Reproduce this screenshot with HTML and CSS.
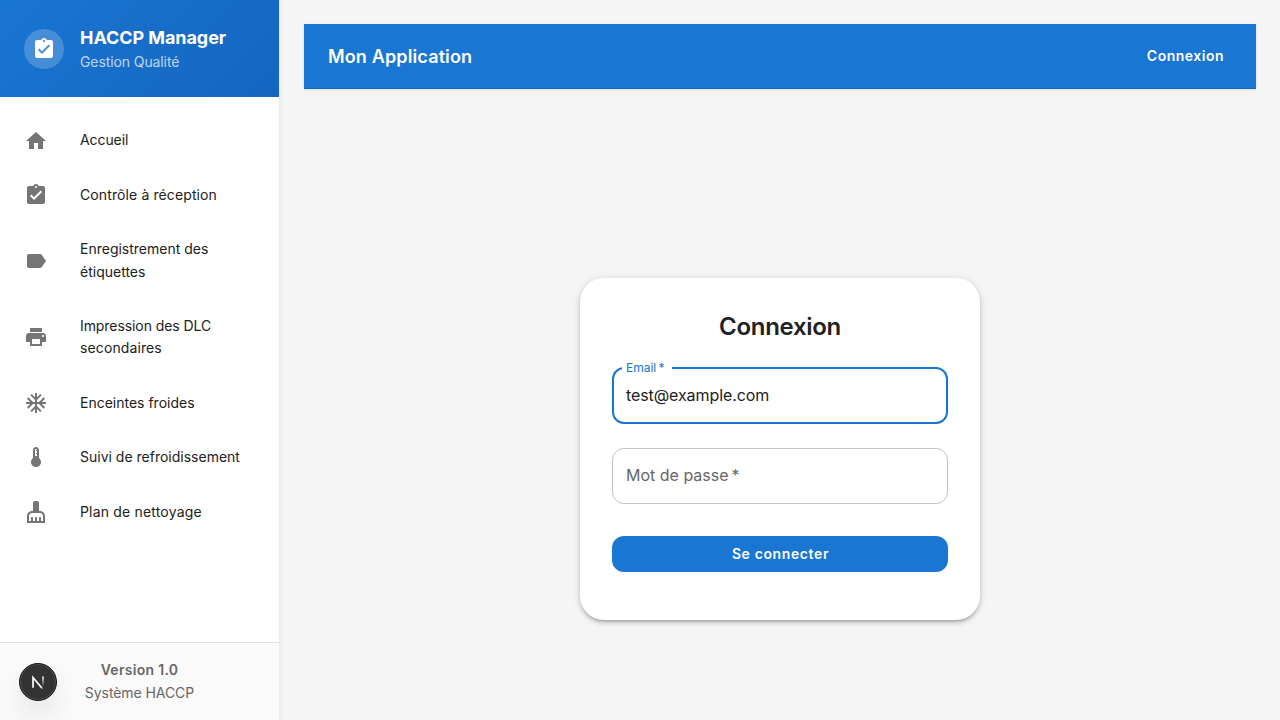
FILE: index.html
```html
<!DOCTYPE html>
<html lang="fr">
<head>
<meta charset="utf-8">
<title>HACCP Manager</title>
<link rel="stylesheet" href="styles.css">
</head>
<body>
<div class="layout">
  <aside class="sidebar">
    <header class="brand">
      <div class="avatar"><svg viewBox="0 0 24 24"><path d="M19 3h-4.18C14.4 1.84 13.3 1 12 1c-1.3 0-2.4.84-2.82 2H5c-1.1 0-2 .9-2 2v14c0 1.1.9 2 2 2h14c1.1 0 2-.9 2-2V5c0-1.1-.9-2-2-2zm-7 0c.55 0 1 .45 1 1s-.45 1-1 1-1-.45-1-1 .45-1 1-1zm-2 14l-4-4 1.41-1.41L10 14.17l6.59-6.59L18 9l-8 8z"/></svg></div>
      <div>
        <div class="brand-title">HACCP Manager</div>
        <div class="brand-subtitle">Gestion Qualité</div>
      </div>
    </header>
    <nav class="nav">
      <a class="nav-item"><svg viewBox="0 0 24 24"><path d="M10 20v-6h4v6h5v-8h3L12 3 2 12h3v8z"/></svg><span class="tight">Accueil</span></a>
      <a class="nav-item"><svg viewBox="0 0 24 24"><path d="M19 3h-4.18C14.4 1.84 13.3 1 12 1c-1.3 0-2.4.84-2.82 2H5c-1.1 0-2 .9-2 2v14c0 1.1.9 2 2 2h14c1.1 0 2-.9 2-2V5c0-1.1-.9-2-2-2zm-7 0c.55 0 1 .45 1 1s-.45 1-1 1-1-.45-1-1 .45-1 1-1zm-2 14l-4-4 1.41-1.41L10 14.17l6.59-6.59L18 9l-8 8z"/></svg><span class="loose">Contrôle à réception</span></a>
      <a class="nav-item"><svg viewBox="0 0 24 24"><path d="M17.63 5.84C17.27 5.33 16.67 5 16 5L5 5.01C3.9 5.01 3 5.9 3 7v10c0 1.1.9 1.99 2 1.99L16 19c.67 0 1.27-.33 1.63-.84L22 12l-4.37-6.16z"/></svg><span>Enregistrement des étiquettes</span></a>
      <a class="nav-item"><svg viewBox="0 0 24 24"><path d="M19 8H5c-1.66 0-3 1.34-3 3v6h4v4h12v-4h4v-6c0-1.66-1.34-3-3-3zm-3 11H8v-5h8v5zm3-7c-.55 0-1-.45-1-1s.45-1 1-1 1 .45 1 1-.45 1-1 1zm-1-9H6v4h12V3z"/></svg><span><span class="tight">Impression des DLC</span> <span class="loose">secondaires</span></span></a>
      <a class="nav-item"><svg viewBox="0 0 24 24"><path d="M22 11h-4.17l3.24-3.24-1.41-1.42L15 11h-2V9l4.66-4.66-1.42-1.41L13 6.17V2h-2v4.17L7.76 2.93 6.34 4.34 11 9v2H9L4.34 6.34 2.93 7.76 6.17 11H2v2h4.17l-3.24 3.24 1.41 1.42L9 13h2v2l-4.66 4.66 1.42 1.41L11 17.83V22h2v-4.17l3.24 3.24 1.42-1.41L13 15v-2h2l4.66 4.66 1.41-1.42L17.83 13H22z"/></svg><span>Enceintes froides</span></a>
      <a class="nav-item"><svg viewBox="0 0 24 24"><path d="M15 13V5c0-1.66-1.34-3-3-3S9 3.34 9 5v8c-1.21.91-2 2.37-2 4 0 2.76 2.24 5 5 5s5-2.24 5-5c0-1.63-.79-3.09-2-4zm-4-8c0-.55.45-1 1-1s1 .45 1 1h-1v1h1v2h-1v1h1v2h-2V5z"/></svg><span>Suivi de refroidissement</span></a>
      <a class="nav-item"><svg viewBox="0 0 24 24"><path d="M16 11h-1V3c0-1.1-.9-2-2-2h-2c-1.1 0-2 .9-2 2v8H8c-2.76 0-5 2.24-5 5v7h18v-7c0-2.76-2.24-5-5-5zm3 10h-2v-3c0-.55-.45-1-1-1s-1 .45-1 1v3h-2v-3c0-.55-.45-1-1-1s-1 .45-1 1v3H9v-3c0-.55-.45-1-1-1s-1 .45-1 1v3H5v-5c0-1.65 1.35-3 3-3h8c1.65 0 3 1.35 3 3v5z"/></svg><span class="looser">Plan de nettoyage</span></a>
    </nav>
    <footer class="sidebar-footer">
      <div class="version">Version 1.0</div>
      <div class="system">Système HACCP</div>
    </footer>
  </aside>
  <main class="main">
    <div class="appbar">
      <div class="appbar-title">Mon Application</div>
      <a class="appbar-link">Connexion</a>
    </div>
    <div class="content">
      <form class="card">
        <h1 class="card-title">Connexion</h1>
        <div class="field field-focused">
          <label class="field-label">Email&thinsp;*</label>
          <span class="field-value">test@example.com</span>
        </div>
        <div class="field">
          <label class="field-placeholder">Mot de passe&thinsp;*</label>
        </div>
        <button type="button" class="submit">Se connecter</button>
      </form>
    </div>
  </main>
</div>
<div class="dev-badge">
  <svg viewBox="0 0 40 40" fill="none">
    <defs>
      <linearGradient id="diag" x1="21" y1="21" x2="26" y2="28" gradientUnits="userSpaceOnUse"><stop stop-color="#fff"/><stop offset=".6" stop-color="#fff"/><stop offset="1" stop-color="#fff" stop-opacity="0"/></linearGradient>
      <linearGradient id="stem" x1="25" y1="14" x2="25" y2="25" gradientUnits="userSpaceOnUse"><stop stop-color="#fff"/><stop offset="1" stop-color="#fff" stop-opacity="0"/></linearGradient>
    </defs>
    <path d="M14.5 26.5V15l10.7 12.8" stroke="url(#diag)" stroke-width="1.9"/>
    <path d="M25.6 13.8v10.5" stroke="url(#stem)" stroke-width="1.8"/>
  </svg>
</div>
</body>
</html>
```
FILE: styles.css
```css
* { box-sizing: border-box; }

body {
  margin: 0;
  background: #f5f5f5;
  color: #212121;
  font-family: Inter, Roboto, sans-serif;
  font-size: 14px;
  line-height: 1.6;
}

.layout { display: flex; height: 100vh; }

.sidebar {
  display: flex;
  flex-direction: column;
  width: 280px;
  flex: none;
  background: #fff;
  border-right: 1px solid #ebebeb;
  box-shadow: 2px 0 4px rgba(0, 0, 0, 0.03);
}

.brand {
  display: flex;
  align-items: center;
  gap: 16px;
  height: 97.45px;
  padding: 0 24px;
  color: #fff;
  background: linear-gradient(135deg, #1976d2 0%, #1565c0 100%);
}

.avatar {
  display: grid;
  place-items: center;
  width: 40px;
  height: 40px;
  border-radius: 50%;
  background: rgba(255, 255, 255, 0.2);
}

.avatar svg { width: 24px; height: 24px; fill: #fff; }

.brand-title { font-size: 18px; font-weight: 700; line-height: 27px; letter-spacing: -0.07px; }
.brand-subtitle { opacity: 0.7; letter-spacing: -0.1px; }

.nav {
  display: flex;
  flex-direction: column;
  flex: 1;
  gap: 8px;
  padding-top: 20px;
}

.nav-item {
  display: flex;
  align-items: center;
  gap: 32px;
  min-height: 46.4px;
  padding: 12px 24px;
}

.nav-item svg { width: 24px; height: 24px; flex: none; margin: -1px 0; fill: #757575; }

.tight { letter-spacing: -0.08px; }
.loose { letter-spacing: 0.11px; }
.looser { letter-spacing: 0.18px; }

.sidebar-footer {
  padding: 16px;
  border-top: 1px solid #e0e0e0;
  background: #fafafa;
  color: #666;
  text-align: center;
}

.version { font-weight: 600; letter-spacing: 0.3px; }
.system { letter-spacing: -0.07px; }

.main {
  display: flex;
  flex-direction: column;
  flex: 1;
  padding: 24px;
}

.appbar {
  display: flex;
  align-items: center;
  justify-content: space-between;
  height: 65px;
  flex: none;
  padding: 0 32px 0 24px;
  border-bottom: 1px solid #166abd;
  background: #1976d2;
  box-shadow: 0 1px 3px rgba(0, 0, 0, 0.1);
  color: #fff;
}

.appbar-title { padding-top: 2px; font-size: 18px; font-weight: 600; letter-spacing: 0.14px; }
.appbar-link { font-weight: 600; letter-spacing: 0.5px; }

.content {
  display: flex;
  justify-content: center;
  padding-top: 189px;
}

.card {
  display: flex;
  flex-direction: column;
  width: 400px;
  padding: 32px 32px 48px;
  border-radius: 24px;
  background: #fff;
  box-shadow: 0 3px 3px -2px rgba(0, 0, 0, 0.2), 0 3px 4px 0 rgba(0, 0, 0, 0.14), 0 1px 8px 0 rgba(0, 0, 0, 0.12);
}

.card-title {
  margin: 0 0 23px;
  font-size: 24px;
  font-weight: 600;
  line-height: 34px;
  letter-spacing: -0.3px;
  text-align: center;
}

.field {
  position: relative;
  display: flex;
  align-items: center;
  height: 56px;
  margin-bottom: 24px;
  padding: 0 13px;
  border: 1px solid #c4c4c4;
  border-radius: 12px;
  font-size: 16px;
}

.field-focused { height: 57px; padding: 0 12px; border: 2px solid #1976d2; }

.field-value { letter-spacing: -0.09px; }

.field-label {
  position: absolute;
  top: -11px;
  left: 8px;
  width: 50px;
  padding-left: 4px;
  background: #fff;
  color: #1976d2;
  font-size: 12px;
  line-height: 20px;
}

.field-placeholder { color: #666; }

.submit {
  height: 36px;
  margin-top: 8px;
  padding: 0 5px 0 6px;
  border: 0;
  border-radius: 12px;
  background: #1976d2;
  color: #fff;
  font: 600 14px/24px Inter, Roboto, sans-serif;
  letter-spacing: 0.62px;
}

/* Floating development indicator above the sidebar */
.dev-badge {
  position: fixed;
  left: 19px;
  bottom: 19px;
  width: 38px;
  height: 38px;
  border: 1px solid #171717;
  border-radius: 50%;
  background: #333;
  box-shadow: inset 0 0 0 1px #505050, 0 16px 32px -8px rgba(0, 0, 0, 0.24);
}

.dev-badge svg { display: block; width: 36px; height: 36px; }
```
